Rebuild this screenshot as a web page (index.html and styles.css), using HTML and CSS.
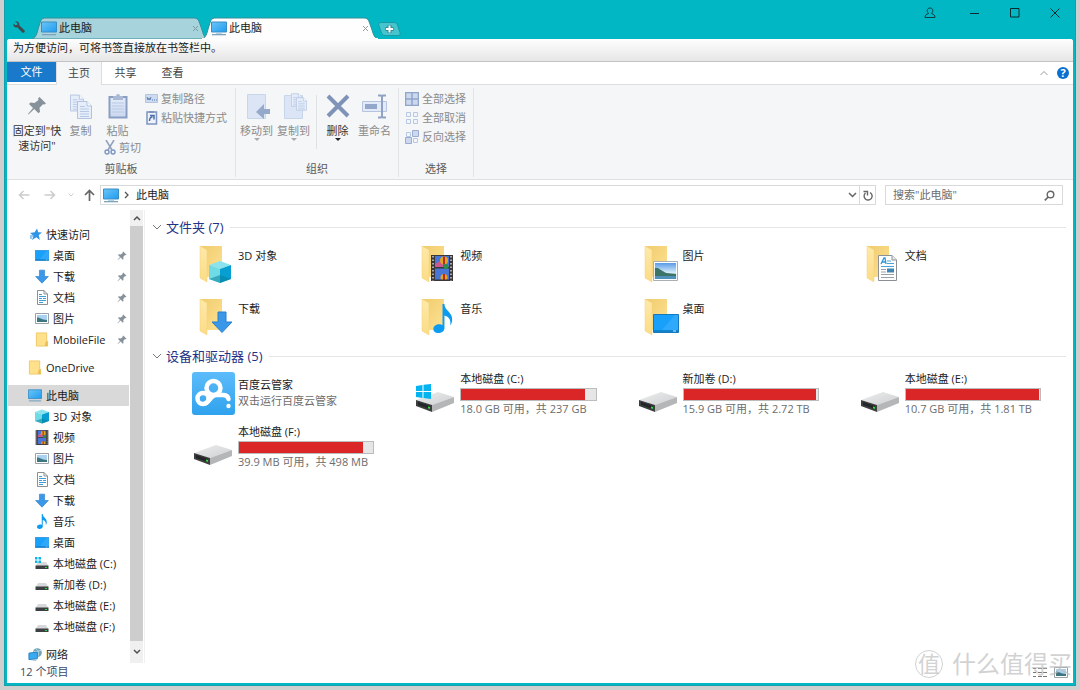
FILE: index.html
```html
<!DOCTYPE html>
<html lang="zh-CN">
<head>
<meta charset="utf-8">
<title>此电脑</title>
<link rel="stylesheet" href="styles.css">
</head>
<body>
<svg class="sprite" aria-hidden="true">
  <defs>
    <linearGradient id="gBack" x1="0" y1="0" x2="1" y2="1"><stop offset="0" stop-color="#efcb6d"/><stop offset="1" stop-color="#ffe293"/></linearGradient>
    <linearGradient id="gFlap" x1="0" y1="0" x2="0" y2="1"><stop offset="0" stop-color="#ffe9a9"/><stop offset="1" stop-color="#fbdc86"/></linearGradient>
    <linearGradient id="gScreen" x1="0" y1="0" x2="1" y2="1"><stop offset="0" stop-color="#6cc5f7"/><stop offset="1" stop-color="#1e9cf0"/></linearGradient>
    <linearGradient id="gSky" x1="0" y1="0" x2="0" y2="1"><stop offset="0" stop-color="#5a9be8"/><stop offset=".6" stop-color="#d8ecf8"/><stop offset="1" stop-color="#5d9fc9"/></linearGradient>
    <linearGradient id="gDrive" x1="0" y1="0" x2="1" y2="1"><stop offset="0" stop-color="#eceded"/><stop offset="1" stop-color="#cfd0d2"/></linearGradient>
    <linearGradient id="gCloud" x1="0" y1="0" x2="0" y2="1"><stop offset="0" stop-color="#5dbcfa"/><stop offset="1" stop-color="#2fa2ee"/></linearGradient>
    <linearGradient id="gClip" x1="0" y1="0" x2="0" y2="1"><stop offset="0" stop-color="#e4ecf8"/><stop offset="1" stop-color="#c9d7ee"/></linearGradient>
  </defs>
  <symbol id="pc" viewBox="0 0 16 15"><path d="M.5 1h15v10H.5z" fill="url(#gScreen)" stroke="#3b8ec4"/><path d="M5 12h6v1H5z" fill="#b9d3e2"/><path d="M1 13h14v1.300H1z" fill="#7ba4bd"/></symbol>
  <symbol id="cube" viewBox="0 0 22 22"><path d="M0 4 11 0l11 4-11 4z" fill="#8be3ee"/><path d="M0 4l11 4v14L0 18z" fill="#6fdbe6"/><path d="M22 4 11 8v14l11-4z" fill="#079fd2"/><path d="M0 18l11-4 11 4-11 4z" fill="#087f9c" opacity=".55"/></symbol>
  <symbol id="film" viewBox="0 0 22 26"><path d="M0 0h22v26H0z" fill="#3b3637"/><path d="M4 1h14v11H4zM4 13.500h14V25H4z" fill="#4776d8"/><path d="M2 1v25M20 1v25" stroke="#d0d0d0" stroke-width="1.500" stroke-dasharray="1.500 2"/><path d="M4 9l5-3 4 4v2H4z" fill="#c95a91"/><circle cx="13" cy="5.500" r="4" fill="#e3a421"/><path d="M12 1.500h2v8h-2z" fill="#b92b1e"/><path d="M12 10h3l-1 2z" fill="#3c1e22"/><circle cx="15" cy="11.500" r="2.500" fill="#298e4a"/><circle cx="13" cy="22.500" r="3.500" fill="#e3a421"/><path d="M12 19h2v6h-2z" fill="#b92b1e"/><path d="M4 24.500h14V26H4z" fill="#3b3637"/></symbol>
  <symbol id="photo" viewBox="0 0 26 20" preserveAspectRatio="none"><path d="M.5.500h25v19H.5z" fill="#fff" stroke="#a8adb3"/><path d="M2 2h22v16H2z" fill="url(#gSky)"/><path d="M2 7c4-1 6 3 12 5l10 1v2H2z" fill="#3c7467"/><path d="M2 15h22v3H2z" fill="#4f91bb"/></symbol>
  <symbol id="photo-s" viewBox="0 0 14 11"><path d="M.5.500h13v10H.5z" fill="#fff" stroke="#9ba1a8"/><path d="M2 2h10v7H2z" fill="#a9d1f0"/><path d="M2 4.500c3 0 4 2 10 2.500v2H2z" fill="#3d7580"/></symbol>
  <symbol id="doc" viewBox="0 0 19 26" preserveAspectRatio="none"><path d="M.5.500H14L18.500 5v20.500H.5z" fill="#fff" stroke="#8c9095"/><path d="M14 .500V5h4.500" fill="#e7e9eb" stroke="#8c9095"/><path d="M3 9 6 3h1l1 6M4 7h4" fill="none" stroke="#2e96d2" stroke-width="1.300"/><path d="M9 6h4M9 8.500h7M3 11.500h13" stroke="#4ba3d8"/><path d="M3 14.500h5M3 17h5M3 19.500h13M3 22.500h13" stroke="#9a9fa5"/><path d="M9 13.500h7v4H9z" fill="#3f85b3"/></symbol>
  <symbol id="doc-s" viewBox="0 0 14 15"><path d="M2.500.500h6.500L12.500 4v10.500h-10z" fill="#fff" stroke="#8c9095"/><path d="M9 .500V4h3.500" fill="none" stroke="#8c9095"/><path d="M4 4.500h3M4 6.500h7M4 8.500h3M8 8.500h3M4 10.500h7M4 12.500h4" stroke="#3f9dd6"/></symbol>
  <symbol id="down" viewBox="0 0 22 22"><path d="M7 1h8v10h6L11 21.500 1 11h6z" fill="#3b97e8" stroke="#2b7fcb"/></symbol>
  <symbol id="note" viewBox="0 0 20 30"><path d="M9.500 0h2c0 7 8 8 8 16 0 3-1 5-2 6 1-6-2-9-6-10v13c0 3-3 5-6.500 5S0 28 0 25.500s3-4.500 6-4.500c1.500 0 2.500.300 3.500 1z" fill="#0b9bf0"/></symbol>
  <symbol id="desk" viewBox="0 0 26 19" preserveAspectRatio="none"><path d="M.5.500h25v18H.5z" fill="#18a0fb" stroke="#1678bd"/><path d="M9 16 22 1h3v15z" fill="#2fa9fb"/><path d="M1 17h24" stroke="#0b659e"/><path d="M20 17h3" stroke="#cfeaff"/></symbol>
  <symbol id="folder" viewBox="0 0 44 44"><path d="M8 4h22v31H13z" fill="url(#gBack)"/><path d="M8 4l7 4v32l-7-4z" fill="url(#gFlap)" stroke="#f3d27c" stroke-width=".5"/></symbol>
  <symbol id="folder-s" viewBox="0 0 14 16"><path d="M1 1h11v9h1v5H1z" fill="#ffe18c" stroke="#efc964"/><path d="M11 10h2v5h-3z" fill="#e9bd55"/></symbol>
  <symbol id="drive" viewBox="0 0 38 20"><path d="M0 8 22 0l16 5-22 8z" fill="url(#gDrive)"/><path d="M0 8l16 5v7L0 14z" fill="#3b3d3f"/><path d="M2 10l12 4v3L2 13z" fill="#232526"/><path d="M16 13 38 5v6l-22 9z" fill="#b5b6b8"/><path d="M12 14.500l2 .600v1.800l-2-.6z" fill="#2fe03d"/></symbol>
  <symbol id="winlogo" viewBox="0 0 15 15"><path d="M0 2l6.500-1v6H0zM7.500.800 15 0v7H7.500zM0 8h6.500v6L0 13zM7.500 8H15v7l-7.500-1z" fill="#04b4f0"/></symbol>
  <symbol id="drive-s" viewBox="0 0 14 15"><path d="M3 6h8l2.500 4H.500z" fill="#d7d8d9"/><path d="M.5 9.500h13V13H.500z" fill="#3d4042"/><path d="M10 11h2v1h-2z" fill="#30d943"/></symbol>
  <symbol id="drive-c" viewBox="0 0 14 15"><use href="#drive-s"/><path d="M0 1h2.500v2.500H0zM3.500 1H6v2.500H3.500zM0 4.500h2.500V7H0zM3.500 4.500H6V7H3.500z" fill="#08b4ee"/></symbol>
  <symbol id="star" viewBox="0 0 14 14"><path d="M9 1l1.200 3.700L14 5l-3.200 2.500 1 5L8.300 9.800 4 12.500l1.500-4.200L2 5.500l4.700-.7z" fill="#2f94e6"/><path d="M2 8.500h3M2 10.500h2" stroke="#2f94e6"/></symbol>
  <symbol id="net" viewBox="0 0 15 15"><circle cx="10" cy="5.500" r="4.800" fill="#6fa5bb"/><path d="M6 4c3 1 5 0 8-1M8 1c4 3 4 6 2 9" stroke="#c6dde6" fill="none"/><path d="M1 6l9-1v7l-9 1z" fill="#3ba9f0" stroke="#2483c4"/><path d="M3 14l6-1v1z" fill="#6d8b9c"/></symbol>
  <symbol id="pin" viewBox="0 0 20 20"><path d="M12.500 1 19 7.500l-1.500 1-1.500-.3-3.500 3.600.5 4-1.500 1.500-4.300-4.200L1.500 18.500 1 18l5-6-4-4L3.500 6.500l4 .5L11.500 4l-.4-1.700z" fill="#87919a"/></symbol>
  <symbol id="page" viewBox="0 0 15 18"><path d="M.5.500h9.500L14.500 5v12.500H.5z" fill="#e6eefa" stroke="#b3c3df"/><path d="M10 .500V5h4.500" fill="#f7faff" stroke="#b3c3df"/><path d="M3 5.500h5M3 8h9M3 10.500h9M3 13h9M3 15.500h9" stroke="#b7c8e6"/></symbol>
  <symbol id="clip" viewBox="0 0 20 26"><path d="M1.500 4h17v20.500h-17z" fill="url(#gClip)" stroke="#8a9ec4" stroke-width="2"/><path d="M5 3h3a2 2 0 0 1 4 0h3v4H5z" fill="#aab9d6"/><path d="M4 10h12M4 13h12M4 16h12M4 19h12" stroke="#b9c9e6"/></symbol>
</svg>

<div class="window">
  <header class="titlebar">
    <button class="wrench" aria-label="设置"><svg width="12" height="12" viewBox="0 0 12 12"><path d="M2.200.400C4.500-.2 7 1.800 6.200 4.300l5.200 4.900c1.300 1.500-.8 3.500-2.200 2.200L4.300 6.200C1.800 7 0 5 .4 2.500l2 1.700 1.900-.5.100-1.500z" fill="#3c4a50"/></svg></button>
    <nav class="tabs">
      <div class="tab">
        <svg class="tab-shape" viewBox="0 0 176 22" preserveAspectRatio="none"><path d="M0 22C5 20 5 15 7 9S9 1 14 1h148c5 0 5 4 7 9s2 10 7 12z" fill="#a7d4dc" stroke="#338f9b"/></svg>
        <svg class="i16"><use href="#pc"/></svg><a href="#">此电脑</a><button class="x" aria-label="关闭标签"><svg width="7" height="7"><path d="M1 1l5 5M6 1 1 6" stroke="#7f9a9f"/></svg></button>
      </div>
      <div class="tab active">
        <svg class="tab-shape" viewBox="0 0 176 22" preserveAspectRatio="none"><path d="M0 22C5 20 5 15 7 9S9 1 14 1h148c5 0 5 4 7 9s2 10 7 12z" fill="#fefefe" stroke="#338f9b"/><path d="M0 22h176" stroke="#fefefe" stroke-width="2"/></svg>
        <svg class="i16"><use href="#pc"/></svg><a href="#">此电脑</a><button class="x" aria-label="关闭标签"><svg width="7" height="7"><path d="M1 1l5 5M6 1 1 6" stroke="#999"/></svg></button>
      </div>
      <button class="newtab" aria-label="新标签"><svg width="23" height="14" viewBox="0 0 23 14"><path d="M3 .500h13c2 0 3 1 4 4l2 6c.5 2 0 3-2 3H7c-2 0-3-1-4-4L1 4C0 2 1 .500 3 .500z" fill="#46c5cf" stroke="#189ba6"/><path d="M11.500 3v8M7.500 7h8" stroke="#2d8c95" stroke-width="4"/><path d="M11.500 3.500v7M8 7h7" stroke="#fff" stroke-width="2"/></svg></button>
    </nav>
    <div class="controls">
      <button aria-label="用户"><svg width="12" height="12" viewBox="0 0 12 12"><path d="M4.500 6.500C2 3.500 3.500 1 6 1s4 2.500 1.500 5.500C10 7.500 11 8 11 10.500H1C1 8 2 7.500 4.500 6.500z" fill="none" stroke="#123c40"/></svg></button>
      <button aria-label="最小化"><svg width="10" height="10"><path d="M0 5.500h9" stroke="#0b2b2e"/></svg></button>
      <button aria-label="最大化"><svg width="10" height="10"><path d="M.5.500h8.500v8.500H.5z" fill="none" stroke="#0b2b2e"/></svg></button>
      <button aria-label="关闭"><svg width="10" height="10"><path d="M.5.500l9 9M9.500.500l-9 9" stroke="#0b2b2e"/></svg></button>
    </div>
  </header>

  <div class="client">
    <div class="bookmarks">为方便访问，可将书签直接放在书签栏中。</div>

    <nav class="menu">
      <button class="file">文件</button><button class="current">主页</button><button>共享</button><button>查看</button>
      <span class="menu-fill"></span>
      <button class="mini" aria-label="折叠功能区"><svg width="8" height="6"><path d="M.5 5 4 1.500 7.500 5" fill="none" stroke="#999"/></svg></button>
      <button class="help" aria-label="帮助">?</button>
    </nav>

    <section class="ribbon">
      <div class="rgroup clipboard">
        <div class="rbody">
          <button class="big pinbtn dark"><span class="ric"><svg width="20" height="20"><use href="#pin"/></svg></span>固定到"快<br>速访问"</button>
          <button class="big"><span class="ric"><svg width="24" height="27" viewBox="0 0 24 27"><use href="#page" x="1" y="1" width="14" height="18"/><use href="#page" x="8" y="8" width="15" height="18"/></svg></span>复制</button>
          <div class="pastecol">
            <button class="big"><span class="ric"><svg width="20" height="26"><use href="#clip"/></svg></span>粘贴</button>
            <button class="small"><svg width="12" height="15" viewBox="0 0 12 15"><path d="M2 0l6 10M10 0 4 10" stroke="#91a0bc" stroke-width="1.500"/><circle cx="3" cy="12" r="2" fill="none" stroke="#7c95c2" stroke-width="1.400"/><circle cx="9" cy="12" r="2" fill="none" stroke="#7c95c2" stroke-width="1.400"/></svg>剪切</button>
          </div>
          <div class="smallcol">
            <button class="small"><svg width="13" height="9"><path d="M.5.500h12v8H.5z" fill="#cddaf0" stroke="#b5c5e0"/><path d="M2 3l1 3 1-2 1 2 1-3M7 6h1M9 6h1M11 6h1" stroke="#5d7fb5" fill="none"/></svg>复制路径</button>
            <button class="small"><svg width="13" height="15"><path d="M2 2h9.500v12H2z" fill="#eef3fb" stroke="#7f95bf" stroke-width="1.500"/><path d="M4 1h5v2H4z" fill="#7f95bf"/><path d="M4.500 11c0-3 1-4 3-4M5 5.500h4V9.500" stroke="#4c6da8" stroke-width="1.500" fill="none"/></svg>粘贴快捷方式</button>
          </div>
        </div>
        <div class="rlabel">剪贴板</div>
      </div>
      <div class="rgroup organize">
        <div class="rbody">
          <button class="big drop"><span class="ric"><svg width="26" height="27"><path d="M3.500 1.500h18v24h-18z" fill="#dbe5f5" stroke="#c8d6ec"/><path d="M26 17h-6v-5l-8 8 8 7v-5h6z" fill="#95a9ca" transform="translate(0 -1)"/></svg></span>移动到</button>
          <button class="big drop"><span class="ric"><svg width="26" height="28" viewBox="0 0 26 28"><path d="M3.500 3.500h18v23h-18z" fill="#dbe5f5" stroke="#c8d6ec"/><use href="#page" x="10" y="1" width="11" height="14"/><use href="#page" x="15" y="5" width="11" height="14"/></svg></span>复制到</button>
          <span class="rsep"></span>
          <button class="big drop dark"><span class="ric"><svg width="24" height="24"><path d="M2 2l20 20M22 2 2 22" stroke="#7f92b8" stroke-width="4"/></svg></span>删除</button>
          <button class="big"><span class="ric"><svg width="26" height="25"><path d="M.5 7.500h24v10H.5z" fill="#e2eaf7" stroke="#b5c5e0"/><path d="M3 10h12v5H3z" fill="#93a7cb"/><path d="M16 1.500h3l1 1 1-1h3M20 2v21M16 23.500h3l1-1 1 1h3" fill="none" stroke="#8fa2c4" stroke-width="2"/></svg></span>重命名</button>
        </div>
        <div class="rlabel">组织</div>
      </div>
      <div class="rgroup select">
        <div class="rbody">
          <div class="smallcol">
            <button class="small"><svg width="14" height="14"><path d="M.5.500h13v13H.5zM7 0v14M0 7h14" fill="#cbd8ee" stroke="#91a5c9" stroke-width="1.500"/></svg>全部选择</button>
            <button class="small"><svg width="14" height="14"><path d="M1.500 1.500h4v4h-4zM8.500 1.500h4v4h-4zM1.500 8.500h4v4h-4zM8.500 8.500h4v4h-4z" fill="#f1f5fc" stroke="#b9c8e2"/></svg>全部取消</button>
            <button class="small"><svg width="14" height="14"><path d="M1.500 2.500h4v4h-4zM8.500 8.500h4v4h-4z" fill="#f1f5fc" stroke="#b9c8e2"/><path d="M7.500.500h6v6h-6zM.5 7.500h6v6h-6z" fill="#cbd8ee" stroke="#9aadcf"/></svg>反向选择</button>
          </div>
        </div>
        <div class="rlabel">选择</div>
      </div>
    </section>

    <div class="address">
      <button class="nav" aria-label="后退"><svg width="12" height="10"><path d="M11.500 5H1.500M5.500 1l-4 4 4 4" fill="none" stroke="#ccc" stroke-width="1.500"/></svg></button>
      <button class="nav" aria-label="前进"><svg width="12" height="10"><path d="M.5 5h10M6.500 1l4 4-4 4" fill="none" stroke="#ccc" stroke-width="1.500"/></svg></button>
      <button class="nav recent" aria-label="最近位置"><svg width="6" height="4"><path d="M.5.500 3 3 5.500.500" fill="none" stroke="#ccc"/></svg></button>
      <button class="nav up" aria-label="向上"><svg width="11" height="12"><path d="M5.500 12V1.500M1 6l4.500-4.500L10 6" fill="none" stroke="#666" stroke-width="1.700"/></svg></button>
      <div class="path">
        <svg class="i16"><use href="#pc"/></svg>
        <svg width="5" height="8"><path d="M1 1l3 3-3 3" fill="none" stroke="#555" stroke-width="1.300"/></svg>
        <a href="#">此电脑</a>
        <button class="pathbtn" aria-label="历史"><svg width="9" height="6"><path d="M1 1l3.500 3.500L8 1" fill="none" stroke="#666" stroke-width="1.500"/></svg></button>
        <button class="pathbtn refresh" aria-label="刷新"><svg width="10" height="11"><path d="M7 2.500A4 4 0 1 1 2.500 3M.5 1.500h4v4" fill="none" stroke="#666" stroke-width="1.400"/></svg></button>
      </div>
      <label class="search"><input type="text" placeholder='搜索"此电脑"' aria-label="搜索"><svg width="11" height="11"><circle cx="6.500" cy="4.500" r="3.300" fill="none" stroke="#666" stroke-width="1.400"/><path d="M4.200 7 .8 10.300" stroke="#666" stroke-width="1.700"/></svg></label>
    </div>

    <div class="main">
      <aside class="side">
        <ul class="tree">
          <li class="root"><a href="#"><svg><use href="#star"/></svg>快速访问</a></li>
          <li><a href="#"><svg><use href="#desk" y="2" height="11"/></svg>桌面</a><svg class="pin"><use href="#pin"/></svg></li>
          <li><a href="#"><svg><use href="#down"/></svg>下载</a><svg class="pin"><use href="#pin"/></svg></li>
          <li><a href="#"><svg><use href="#doc-s"/></svg>文档</a><svg class="pin"><use href="#pin"/></svg></li>
          <li><a href="#"><svg><use href="#photo-s"/></svg>图片</a><svg class="pin"><use href="#pin"/></svg></li>
          <li><a href="#"><svg><use href="#folder-s"/></svg>MobileFile</a><svg class="pin"><use href="#pin"/></svg></li>
          <li class="root gap"><a href="#"><svg><use href="#folder-s"/></svg>OneDrive</a></li>
          <li class="root gap selected"><a href="#"><svg><use href="#pc"/></svg>此电脑</a></li>
          <li><a href="#"><svg><use href="#cube"/></svg>3D 对象</a></li>
          <li><a href="#"><svg><use href="#film"/></svg>视频</a></li>
          <li><a href="#"><svg><use href="#photo-s"/></svg>图片</a></li>
          <li><a href="#"><svg><use href="#doc-s"/></svg>文档</a></li>
          <li><a href="#"><svg><use href="#down"/></svg>下载</a></li>
          <li><a href="#"><svg><use href="#note"/></svg>音乐</a></li>
          <li><a href="#"><svg><use href="#desk" y="2" height="11"/></svg>桌面</a></li>
          <li><a href="#"><svg><use href="#drive-c"/></svg>本地磁盘 (C:)</a></li>
          <li><a href="#"><svg><use href="#drive-s"/></svg>新加卷 (D:)</a></li>
          <li><a href="#"><svg><use href="#drive-s"/></svg>本地磁盘 (E:)</a></li>
          <li><a href="#"><svg><use href="#drive-s"/></svg>本地磁盘 (F:)</a></li>
          <li class="root gap"><a href="#"><svg><use href="#net"/></svg>网络</a></li>
        </ul>
        <div class="scroll">
          <button aria-label="向上滚动"><svg width="8" height="6"><path d="M1 5l3-3 3 3" fill="none" stroke="#505050" stroke-width="1.500"/></svg></button>
          <span class="thumb"></span>
          <button aria-label="向下滚动"><svg width="8" height="6"><path d="M1 1l3 3 3-3" fill="none" stroke="#505050" stroke-width="1.500"/></svg></button>
        </div>
      </aside>

      <main class="content">
        <section class="group">
          <h2><svg width="10" height="7"><path d="M1 1l4 4 4-4" fill="none" stroke="#777"/></svg>文件夹 (7)</h2>
          <div class="tiles">
            <a class="tile folder" href="#"><svg viewBox="0 0 44 44"><use href="#folder" width="44" height="44"/><use href="#cube" x="17" y="19" width="22" height="22"/></svg><span>3D 对象</span></a>
            <a class="tile folder" href="#"><svg viewBox="0 0 44 44"><use href="#folder" width="44" height="44"/><use href="#film" x="17" y="13" width="22" height="26"/></svg><span>视频</span></a>
            <a class="tile folder" href="#"><svg viewBox="0 0 44 44"><use href="#folder" width="44" height="44"/><use href="#photo" x="16" y="19" width="25" height="20"/></svg><span>图片</span></a>
            <a class="tile folder" href="#"><svg viewBox="0 0 44 44"><use href="#folder" width="44" height="44"/><use href="#doc" x="19" y="13" width="19" height="26"/></svg><span>文档</span></a>
            <a class="tile folder" href="#"><svg viewBox="0 0 44 44"><use href="#folder" width="44" height="44"/><use href="#down" x="19" y="16" width="22" height="22"/></svg><span>下载</span></a>
            <a class="tile folder" href="#"><svg viewBox="0 0 44 44"><use href="#folder" width="44" height="44"/><use href="#note" x="19" y="9" width="20" height="29"/></svg><span>音乐</span></a>
            <a class="tile folder" href="#"><svg viewBox="0 0 44 44"><use href="#folder" width="44" height="44"/><use href="#desk" x="16" y="19" width="26" height="19"/></svg><span>桌面</span></a>
          </div>
        </section>
        <section class="group">
          <h2><svg width="10" height="7"><path d="M1 1l4 4 4-4" fill="none" stroke="#777"/></svg>设备和驱动器 (5)</h2>
          <div class="tiles">
            <a class="tile app" href="#"><svg viewBox="0 0 44 44"><rect y="1" width="43" height="43" rx="3" fill="url(#gCloud)"/><g fill="none" stroke="#fff" stroke-width="4.500" stroke-linecap="round"><circle cx="11" cy="27.500" r="5.500"/><circle cx="21.500" cy="17" r="7"/><path d="M14 32c5-3 5-8 10-8h7c3 0 5 1 5.500 4"/></g><circle cx="36.500" cy="35" r="2.200" fill="#fff"/></svg><span>百度云管家</span><small>双击运行百度云管家</small></a>
            <a class="tile disk" href="#"><svg viewBox="0 0 44 44"><use href="#drive" x="2" y="21" width="38" height="20"/><use href="#winlogo" x="2" y="13" width="15" height="15"/></svg><span>本地磁盘 (C:)</span><i class="bar"><b style="width:92%"></b></i><small>18.0 GB 可用，共 237 GB</small></a>
            <a class="tile disk" href="#"><svg viewBox="0 0 44 44"><use href="#drive" x="2" y="21" width="38" height="20"/></svg><span>新加卷 (D:)</span><i class="bar"><b style="width:99%"></b></i><small>15.9 GB 可用，共 2.72 TB</small></a>
            <a class="tile disk" href="#"><svg viewBox="0 0 44 44"><use href="#drive" x="2" y="21" width="38" height="20"/></svg><span>本地磁盘 (E:)</span><i class="bar"><b style="width:99%"></b></i><small>10.7 GB 可用，共 1.81 TB</small></a>
            <a class="tile disk" href="#"><svg viewBox="0 0 44 44"><use href="#drive" x="2" y="21" width="38" height="20"/></svg><span>本地磁盘 (F:)</span><i class="bar"><b style="width:92%"></b></i><small>39.9 MB 可用，共 498 MB</small></a>
          </div>
        </section>
      </main>
    </div>

    <footer class="status"><span>12 个项目</span>
      <div class="views"><svg width="14" height="11"><path d="M0 1.500h3M5 1.500h4M10 1.500h4M0 5.500h3M5 5.500h4M10 5.500h4M0 9.500h3M5 9.500h4M10 9.500h4" stroke="#777"/></svg><svg width="14" height="11"><use href="#photo-s"/></svg></div>
    </footer>
  </div>
  <div class="watermark"><span class="seal">值</span>什么值得买</div>
</div>
</body>
</html>
```

FILE: styles.css
```css
* { box-sizing: border-box; }
body {
  margin: 0;
  height: 100vh;
  padding: 0 4px 4px;
  background: #cfcfcf;
  font: 11px/16px "Open Sans", "Noto Sans CJK SC", sans-serif;
  color: #1a1a1a;
  overflow: hidden;
}
a { color: inherit; text-decoration: none; }
button {
  border: 0;
  padding: 0;
  margin: 0;
  background: none;
  font: inherit;
  color: inherit;
  white-space: nowrap;
  display: flex;
  align-items: center;
  justify-content: center;
}
svg { flex: none; display: block; }
.sprite { position: absolute; width: 0; height: 0; }
.i16 { width: 16px; height: 15px; }

.window {
  position: relative;
  height: 100%;
  display: flex;
  flex-direction: column;
  background: #00b7c3;
  border: 1px solid #12a0aa;
  border-top: 0;
}

/* title bar */
.titlebar { display: flex; height: 39px; align-items: flex-end; }
.wrench { width: 27px; height: 24px; }
.tabs { display: flex; align-items: flex-end; flex: 1; }
.tab {
  position: relative;
  width: 176px;
  height: 22px;
  display: flex;
  align-items: center;
  gap: 2px;
  padding: 0 9px 0 9px;
}
.tab.active { margin-left: -6px; z-index: 1; }
.tab > * { position: relative; }
.tab > .tab-shape { position: absolute; inset: 0; width: 100%; height: 100%; }
.tab a { flex: 1; }
.tab .x { width: 8px; height: 16px; }
.newtab { height: 20px; }
.controls { display: flex; align-self: flex-start; }
.controls button { width: 40px; height: 26px; }
.controls button:first-child { width: 46px; padding-right: 4px; }

.client {
  flex: 1;
  min-height: 0;
  margin: 0 2px 2px;
  display: flex;
  flex-direction: column;
  background: #fff;
  border-radius: 3px 3px 0 0;
}
.bookmarks {
  height: 23px;
  padding: 1px 6px;
  border-bottom: 1px solid #c3c3c6;
  border-radius: 3px 3px 0 0;
  background: linear-gradient(#fefefe, #e6e6e7);
}

/* ribbon */
.menu { display: flex; height: 23px; color: #444; box-shadow: inset 0 -1px #dcdddf; }
.menu button { width: 47px; height: 21px; }
.menu .file { width: 49px; height: 20px; background: #1979ca; color: #fff; }
.menu .current { width: 46px; height: 23px; padding-bottom: 2px; background: #f5f6f7; border: 1px solid #dcdddf; border-width: 0 1px; }
.menu-fill { flex: 1; }
.menu .mini { width: 14px; }
.menu .help {
  width: 12px;
  height: 12px;
  margin: 5px 4px 0 6px;
  border-radius: 50%;
  background: #0a6fd0;
  color: #fff;
  font-weight: 700;
  line-height: 12px;
}
.ribbon {
  display: flex;
  height: 95px;
  background: #f5f6f7;
  border-bottom: 1px solid #dfe0e2;
  color: #8b8b8b;
}
.rgroup {
  display: flex;
  flex-direction: column;
  justify-content: space-between;
  margin: 3px 0 2px;
  border-right: 1px solid #e2e3e4;
}
.clipboard { width: 229px; }
.organize { width: 163px; }
.select { width: 75px; }
.rbody { display: flex; padding: 1px 2px 0; }
.clipboard .rbody { padding-left: 5px; }
.select .rbody { padding-left: 6px; }
.rlabel { text-align: center; color: #5a5a5a; line-height: 16px; }
.big { flex-direction: column; justify-content: flex-start; align-self: flex-start; width: 37px; line-height: 15px; }
.big.pinbtn { width: 50px; }
.dark { color: #333; }
.ric { display: flex; align-items: center; justify-content: center; height: 34px; }
.drop::after {
  content: "";
  border: 3px solid transparent;
  border-top-color: #aaa;
  border-bottom: 0;
}
.drop.dark::after { border-top-color: #222; }
.pastecol { width: 46px; display: flex; flex-direction: column; align-items: flex-start; }
.pastecol .small { padding-left: 5px; }
.smallcol { display: flex; flex-direction: column; align-items: flex-start; }
.small { height: 19px; gap: 3px; }
.rsep { width: 1px; height: 54px; margin: 6px 2px 0 4px; background: #dfe0e2; }

/* address row */
.address { display: flex; align-items: center; height: 30px; padding: 0 10px 0 4px; }
.nav { width: 26px; height: 20px; }
.nav.recent { width: 15px; }
.nav.up { width: 22px; }
.path {
  flex: 1;
  display: flex;
  align-items: center;
  height: 20px;
  gap: 5px;
  padding-left: 2px;
  border: 1px solid #d9d9d9;
}
.path a { flex: 1; padding-left: 2px; }
.pathbtn { width: 14px; height: 18px; margin-right: -5px; }
.pathbtn.refresh { width: 16px; margin: 0; border-left: 1px solid #d9d9d9; }
.search {
  display: flex;
  align-items: center;
  width: 178px;
  height: 20px;
  margin-left: 9px;
  padding: 0 7px;
  border: 1px solid #d9d9d9;
}
.search input { flex: 1; min-width: 0; border: 0; padding: 0; background: none; font: inherit; outline: 0; }
.search input::placeholder { color: #6d6d6d; opacity: 1; }

/* body */
.main { flex: 1; min-height: 0; display: flex; }
.side { display: flex; width: 138px; border-right: 1px solid #f0f0f0; padding-right: 1px; }
.tree { flex: 1; list-style: none; margin: 0; padding: 14px 1px 0; overflow: hidden; white-space: nowrap; }
.tree li { display: flex; align-items: center; height: 21px; padding: 0 2px 0 27px; }
.tree li.root { padding-left: 20px; }
.tree li.gap { margin-top: 7px; }
.tree a { display: flex; align-items: center; gap: 4px; flex: 1; }
.tree svg { width: 14px; height: 15px; }
.tree .pin { width: 10px; height: 10px; }
.tree .selected { background: #d9d9d9; }
.scroll { width: 13px; display: flex; flex-direction: column; background: #f0f0f0; }
.scroll button { height: 16px; }
.scroll .thumb { flex: 1; background: #cdcdcd; }
.scroll button:last-child { height: 22px; }

.content { flex: 1; min-width: 0; padding: 7px 7px 0; }
.group + .group { margin-top: 4px; }
.group h2 {
  display: flex;
  align-items: center;
  height: 20px;
  gap: 4px;
  margin: 0 0 5px;
  font-size: 13px;
  font-weight: 400;
  line-height: 20px;
  color: #1e3287;
}
.group + .group h2 { margin-top: 5px; }
.group h2::after { content: ""; flex: 1; height: 1px; margin-left: 3px; background: #e5e5e5; }
.tiles {
  display: grid;
  grid-template-columns: repeat(4, minmax(0, 1fr));
  gap: 7px 40px;
  padding: 0 25px 0 40px;
}
.tile {
  display: grid;
  grid-template-columns: 46px 1fr;
  align-content: start;
  min-height: 46px;
  white-space: nowrap;
}
.tile svg { grid-row: 1 / span 4; width: 44px; height: 44px; }
.tile > :not(svg) { grid-column: 2; }
.tile small { font-size: 11px; color: #6d6d6d; }
.folder, .app { grid-template-rows: 22px 16px; }
.folder span, .app span { margin-top: 6px; }
.disk { grid-template-rows: 16px 14px 16px; }
.bar { margin-top: 1px; border: 1px solid #bcbcbc; background: #e6e6e6; }
.bar b { display: block; height: 100%; background: #da2626; }

.status { display: flex; justify-content: space-between; height: 20px; padding: 1px 5px 0 13px; color: #3b4a66; }
.views { display: flex; gap: 7px; padding-top: 3px; }

.watermark {
  position: absolute;
  right: 3px;
  bottom: 6px;
  display: flex;
  align-items: center;
  gap: 9px;
  font-size: 24px;
  line-height: 30px;
  color: rgba(190, 190, 190, .7);
  pointer-events: none;
}
.seal { width: 28px; height: 28px; border: 1px solid; border-radius: 50%; font-size: 22px; line-height: 25px; text-align: center; }
```
